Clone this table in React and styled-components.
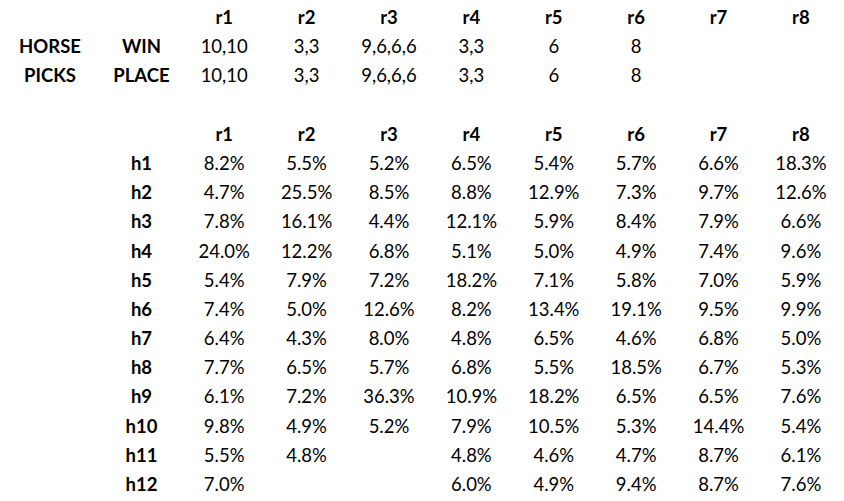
import React from "react";
import styled, { createGlobalStyle } from "styled-components";

const Global = createGlobalStyle`
  html, body { margin: 0; padding: 0; background: #ffffff; }
  body { font-family: Lato, "Open Sans", sans-serif; color: #000; }
`;

const Page = styled.div`
  padding-top: 3px;
  display: flex;
  flex-direction: column;
`;

const Grid = styled.div`
  display: grid;
  grid-template-columns: 100px 83px repeat(8, 82.4px);
  grid-auto-rows: 29.2px;
`;

const Spacer = styled.div`
  height: 29.2px;
`;

const Cell = styled.div`
  font-size: 18.5px;
  line-height: 29.2px;
  text-align: center;
  white-space: nowrap;
  font-weight: ${(p) => (p.$bold ? 700 : 400)};
`;

const races = ["r1", "r2", "r3", "r4", "r5", "r6", "r7", "r8"];

const picks = [
  ["HORSE", "WIN", ["10,10", "3,3", "9,6,6,6", "3,3", "6", "8", "", ""]],
  ["PICKS", "PLACE", ["10,10", "3,3", "9,6,6,6", "3,3", "6", "8", "", ""]],
];

const probs = [
  ["h1", ["8.2%", "5.5%", "5.2%", "6.5%", "5.4%", "5.7%", "6.6%", "18.3%"]],
  ["h2", ["4.7%", "25.5%", "8.5%", "8.8%", "12.9%", "7.3%", "9.7%", "12.6%"]],
  ["h3", ["7.8%", "16.1%", "4.4%", "12.1%", "5.9%", "8.4%", "7.9%", "6.6%"]],
  ["h4", ["24.0%", "12.2%", "6.8%", "5.1%", "5.0%", "4.9%", "7.4%", "9.6%"]],
  ["h5", ["5.4%", "7.9%", "7.2%", "18.2%", "7.1%", "5.8%", "7.0%", "5.9%"]],
  ["h6", ["7.4%", "5.0%", "12.6%", "8.2%", "13.4%", "19.1%", "9.5%", "9.9%"]],
  ["h7", ["6.4%", "4.3%", "8.0%", "4.8%", "6.5%", "4.6%", "6.8%", "5.0%"]],
  ["h8", ["7.7%", "6.5%", "5.7%", "6.8%", "5.5%", "18.5%", "6.7%", "5.3%"]],
  ["h9", ["6.1%", "7.2%", "36.3%", "10.9%", "18.2%", "6.5%", "6.5%", "7.6%"]],
  ["h10", ["9.8%", "4.9%", "5.2%", "7.9%", "10.5%", "5.3%", "14.4%", "5.4%"]],
  ["h11", ["5.5%", "4.8%", "", "4.8%", "4.6%", "4.7%", "8.7%", "6.1%"]],
  ["h12", ["7.0%", "", "", "6.0%", "4.9%", "9.4%", "8.7%", "7.6%"]],
];

function HeaderRow() {
  return (
    <>
      <Cell />
      <Cell />
      {races.map((r) => (
        <Cell key={r} $bold>
          {r}
        </Cell>
      ))}
    </>
  );
}

export default function App() {
  return (
    <>
      <Global />
      <Page>
        <Grid>
          <HeaderRow />
          {picks.map(([a, b, vals]) => (
            <React.Fragment key={b}>
              <Cell $bold>{a}</Cell>
              <Cell $bold>{b}</Cell>
              {vals.map((v, i) => (
                <Cell key={i}>{v}</Cell>
              ))}
            </React.Fragment>
          ))}
        </Grid>
        <Spacer />
        <Grid>
          <HeaderRow />
          {probs.map(([h, vals]) => (
            <React.Fragment key={h}>
              <Cell />
              <Cell $bold>{h}</Cell>
              {vals.map((v, i) => (
                <Cell key={i}>{v}</Cell>
              ))}
            </React.Fragment>
          ))}
        </Grid>
      </Page>
    </>
  );
}
